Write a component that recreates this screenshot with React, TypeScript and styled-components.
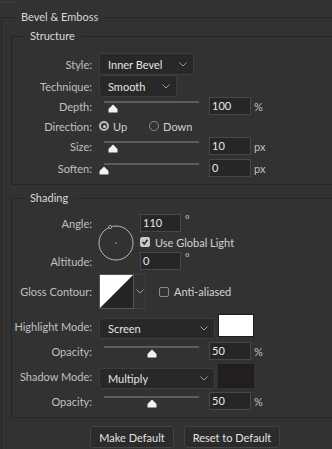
import styled, { createGlobalStyle } from "styled-components";

const GlobalStyle = createGlobalStyle`
  html, body {
    margin: 0;
    padding: 0;
    background: #323232;
  }
  body {
    font-family: Lato, "Open Sans", sans-serif;
    font-size: 11px;
    color: #c2c2c2;
  }
  * {
    box-sizing: border-box;
  }
`;

const Chevron = () => (
  <svg width="8" height="5" viewBox="0 0 8 5">
    <polyline points="0.5,0.5 4,4 7.5,0.5" fill="none" stroke="#9a9a9a" strokeWidth="1" />
  </svg>
);

type SliderProps = { pct: number };
const SliderControl = ({ pct }: SliderProps) => (
  <Slider>
    <Track />
    <Thumb width="10" height="9" viewBox="0 0 10 9" style={{ left: pct * 95 - 5 }}>
      <path d="M5 0.5 L9.5 5 L9.5 8 Q9.5 8.5 9 8.5 L1 8.5 Q0.5 8.5 0.5 8 L0.5 5 Z" fill="#f2f2f2" />
    </Thumb>
  </Slider>
);

type ValueRowProps = { label: string; pct: number; value: string; unit: string; mt?: number };
const ValueRow = ({ label, pct, value, unit, mt }: ValueRowProps) => (
  <Row $h={18} $mt={mt}>
    <Label>{label}</Label>
    <SliderControl pct={pct} />
    <NumBox $w={42}>{value}</NumBox>
    <Unit>{unit}</Unit>
  </Row>
);

const App = () => {
  return (
    <>
      <GlobalStyle />
      <Corner />
      <Group $pt={5}>
        <Legend $ml={14}>Bevel &amp; Emboss</Legend>
        <Group $inner $pt={10}>
          <Legend $ml={13}>Structure</Legend>
          <Row $h={22}>
            <Label>Style:</Label>
            <Select $w={95}>
              Inner Bevel
              <Chevron />
            </Select>
          </Row>
          <Row $h={22}>
            <Label>Technique:</Label>
            <Select $w={78}>
              Smooth
              <Chevron />
            </Select>
          </Row>
          <ValueRow label="Depth:" pct={0.095} value="100" unit="%" />
          <Row $h={22}>
            <Label>Direction:</Label>
            <Radio $on />
            <RadioText>Up</RadioText>
            <Radio />
            <RadioText>Down</RadioText>
          </Row>
          <ValueRow label="Size:" pct={0.095} value="10" unit="px" />
          <ValueRow label="Soften:" pct={0} value="0" unit="px" mt={4} />
        </Group>

        <Group $inner $pt={9} $mt={6}>
          <Legend $ml={13}>Shading</Legend>
          <AngleGrid>
            <GridLabel $row={1}>Angle:</GridLabel>
            <Dial width="36" height="36" viewBox="0 0 36 36">
              <circle cx="18" cy="18" r="17" fill="none" stroke="#b8b8b8" strokeWidth="1" />
              <circle cx="12.2" cy="2" r="1.6" fill="#323232" stroke="#b8b8b8" strokeWidth="0.8" />
              <rect x="17.5" y="17.5" width="1.2" height="1.2" fill="#c8c8c8" />
            </Dial>
            <Cell $row={1}>
              <NumBox $w={41}>110</NumBox>
              <Degree>°</Degree>
            </Cell>
            <Cell $row={2}>
              <CheckBox $on>
                <svg width="8" height="8" viewBox="0 0 8 8">
                  <polyline points="1.5,4 3.3,6 6.5,1.8" fill="none" stroke="#2a2a2a" strokeWidth="1.6" />
                </svg>
              </CheckBox>
              <CheckText>Use Global Light</CheckText>
            </Cell>
            <GridLabel $row={3}>Altitude:</GridLabel>
            <Cell $row={3}>
              <NumBox $w={41}>0</NumBox>
              <Degree>°</Degree>
            </Cell>
          </AngleGrid>

          <Row $h={35} $mt={4}>
            <Label>Gloss Contour:</Label>
            <Contour width="35" height="35" viewBox="0 0 35 35">
              <rect x="0" y="0" width="35" height="35" fill="#242424" />
              <polygon points="0,0 35,0 0,35" fill="#ffffff" />
              <rect x="0.5" y="0.5" width="34" height="34" fill="none" stroke="#555" strokeWidth="1" />
            </Contour>
            <ContourArrow>
              <Chevron />
            </ContourArrow>
            <CheckBox $ml={13} />
            <CheckText>Anti-aliased</CheckText>
          </Row>

          <Row $h={25} $mt={5}>
            <Label>Highlight Mode:</Label>
            <Select $w={116} $h={21} $end>
              Screen
              <Chevron />
            </Select>
            <Swatch $c="#ffffff" $h={23} />
          </Row>
          <ValueRow label="Opacity:" pct={0.5} value="50" unit="%" mt={3} />
          <Row $h={25} $mt={4}>
            <Label>Shadow Mode:</Label>
            <Select $w={116} $h={21} $end>
              Multiply
              <Chevron />
            </Select>
            <Swatch $c="#231f20" $h={24} />
          </Row>
          <ValueRow label="Opacity:" pct={0.5} value="50" unit="%" mt={3} />
        </Group>

        <Buttons>
          <Button $w={84}>Make Default</Button>
          <Button $w={96}>Reset to Default</Button>
        </Buttons>
      </Group>
    </>
  );
};
export default App;

const Corner = styled.div`
  width: 16px;
  height: 3px;
  border-right: 1px solid #3e3e3e;
  border-bottom: 1px solid #3e3e3e;
`;

const Group = styled.fieldset<{ $inner?: boolean; $pt: number; $mt?: number }>`
  margin: ${(p) => (p.$inner ? `${p.$mt ?? 0}px 0 0 9px` : "7px 0 0 1px")};
  padding: ${(p) => (p.$inner ? `${p.$pt}px 0 7px 0` : `${p.$pt}px 0 8px 0`)};
  min-width: 0;
  border: 1px solid #262626;
  border-right: none;
  ${(p) => !p.$inner && "border-bottom: none;"}
`;

const Legend = styled.legend<{ $ml: number }>`
  margin-left: ${(p) => p.$ml}px;
  padding: 0 7px 0 5px;
  line-height: 14px;
  color: #d8d8d8;
`;

const Row = styled.div<{ $h: number; $mt?: number }>`
  display: flex;
  align-items: center;
  height: ${(p) => p.$h}px;
  margin-top: ${(p) => p.$mt ?? 0}px;
`;

const Label = styled.span`
  width: 80px;
  flex-shrink: 0;
  margin-right: 7px;
  text-align: right;
  color: #c0c0c0;
`;

const Select = styled.div<{ $w: number; $h?: number; $end?: boolean }>`
  display: flex;
  align-items: center;
  justify-content: space-between;
  width: ${(p) => p.$w}px;
  height: ${(p) => p.$h ?? 22}px;
  padding: 0 6px 0 8px;
  align-self: ${(p) => (p.$end ? "flex-end" : "center")};
  background: #282828;
  border: 1px solid #3d3d3d;
  border-radius: 3px;
  color: #e4e4e4;
`;

const Slider = styled.div`
  position: relative;
  align-self: flex-start;
  flex-shrink: 0;
  width: 95px;
  height: 13px;
  margin: 4px 10px 0 5px;
`;

const Track = styled.div`
  height: 2px;
  background: #5c5c5c;
`;

const Thumb = styled.svg`
  position: absolute;
  top: 3px;
`;

const NumBox = styled.div<{ $w: number }>`
  width: ${(p) => p.$w}px;
  height: 18px;
  padding-left: 2px;
  line-height: 16px;
  background: #262626;
  border: 1px solid #474747;
  color: #e8e8e8;
`;

const Unit = styled.span`
  margin-left: 3px;
  color: #c0c0c0;
`;

const Degree = styled.span`
  align-self: flex-start;
  margin-left: 4px;
  line-height: 12px;
  color: #c0c0c0;
`;

const Radio = styled.span<{ $on?: boolean }>`
  display: flex;
  align-items: center;
  justify-content: center;
  width: 10px;
  height: 10px;
  border-radius: 50%;
  border: ${(p) => (p.$on ? "2px solid #bdbdbd" : "1px solid #8c8c8c")};
  &::after {
    content: "";
    display: ${(p) => (p.$on ? "block" : "none")};
    width: 3px;
    height: 3px;
    border-radius: 50%;
    background: #d0d0d0;
  }
`;

const RadioText = styled.span`
  margin: 0 22px 0 4px;
  color: #d0d0d0;
`;

const AngleGrid = styled.div`
  display: grid;
  grid-template-columns: 80px 36px auto;
  grid-template-rows: 18px 20px 18px;
  column-gap: 6px;
  align-items: center;
`;

const GridLabel = styled.span<{ $row: number }>`
  grid-column: 1;
  grid-row: ${(p) => p.$row};
  text-align: right;
  color: #c0c0c0;
`;

const Dial = styled.svg`
  grid-column: 2;
  grid-row: 1 / 4;
  align-self: center;
  margin-top: 2px;
`;

const Cell = styled.div<{ $row: number }>`
  grid-column: 3;
  grid-row: ${(p) => p.$row};
  display: flex;
  align-items: center;
  height: 100%;
`;

const CheckBox = styled.span<{ $on?: boolean; $ml?: number }>`
  display: flex;
  align-items: center;
  justify-content: center;
  width: 10px;
  height: 10px;
  margin-left: ${(p) => p.$ml ?? 0}px;
  border-radius: 2px;
  background: ${(p) => (p.$on ? "#c8c8c8" : "transparent")};
  border: 1px solid ${(p) => (p.$on ? "#c8c8c8" : "#8a8a8a")};
`;

const CheckText = styled.span`
  margin-left: 5px;
  color: #d4d4d4;
`;

const Contour = styled.svg`
  flex-shrink: 0;
`;

const ContourArrow = styled.div`
  display: flex;
  align-items: center;
  justify-content: center;
  width: 12px;
  height: 35px;
  border: 1px solid #3d3d3d;
  border-left: none;
`;

const Swatch = styled.div<{ $c: string; $h: number }>`
  align-self: flex-start;
  width: 36px;
  height: ${(p) => p.$h}px;
  margin-left: 3px;
  background: ${(p) => p.$c};
  border: 1px solid #1c1c1c;
`;

const Buttons = styled.div`
  display: flex;
  gap: 10px;
  margin-top: 8px;
  padding-left: 88px;
`;

const Button = styled.button<{ $w: number }>`
  width: ${(p) => p.$w}px;
  height: 22px;
  padding: 0;
  background: #2b2b2b;
  border: 1px solid #434343;
  border-radius: 3px;
  color: #e2e2e2;
  font: inherit;
`;
